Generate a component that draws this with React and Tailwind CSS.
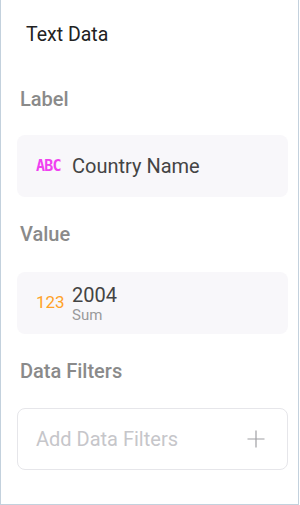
export default function App() {
  return (
    <div className="w-[299px] h-[505px] bg-white border-l border-r border-b border-[#c3d1dd] font-['Roboto',sans-serif] overflow-hidden">
      <div className="flex flex-col pl-[16px] pr-[10px] pt-[23px]">
        {/* Header */}
        <h1 className="pl-[9px] text-[19.5px] leading-[24px] text-[#222222]">Text Data</h1>

        {/* Label */}
        <h2 className="mt-[40px] pl-[3px] text-[20px] leading-[24px] font-medium text-[#8a8a8a]">Label</h2>
        <div className="mt-[24px] h-[62px] rounded-[8px] bg-[#f8f7fa] flex items-center pl-[19px]">
          <span className="w-[36px] font-['DejaVu_Sans_Mono',monospace] text-[15px] font-bold tracking-[-0.8px] text-[#f040f0]">ABC</span>
          <span className="text-[20px] text-[#444444]">Country Name</span>
        </div>

        {/* Value */}
        <h2 className="mt-[25px] pl-[3px] text-[20px] leading-[24px] font-medium text-[#8a8a8a]">Value</h2>
        <div className="mt-[26px] h-[62px] rounded-[8px] bg-[#f8f7fa] flex items-center pl-[19px]">
          <span className="w-[36px] text-[17px] text-[#ffa228]">123</span>
          <div className="flex flex-col">
            <span className="text-[20px] leading-[24px] text-[#444444]">2004</span>
            <span className="text-[15px] leading-[16px] text-[#9a9a9a]">Sum</span>
          </div>
        </div>

        {/* Data Filters */}
        <h2 className="mt-[25px] pl-[3px] text-[20px] leading-[24px] font-medium text-[#8a8a8a]">Data Filters</h2>
        <div className="mt-[25px] h-[62px] rounded-[8px] border border-[#e6e6ea] flex items-center justify-between pl-[18px] pr-[22px]">
          <span className="text-[20px] text-[#c6c6ca]">Add Data Filters</span>
          <svg width="18" height="18" viewBox="0 0 18 18" className="text-[#a0a0a4]">
            <path d="M9 0.5V17.5M0.5 9H17.5" stroke="currentColor" strokeWidth="1.2" />
          </svg>
        </div>
      </div>
    </div>
  );
}
